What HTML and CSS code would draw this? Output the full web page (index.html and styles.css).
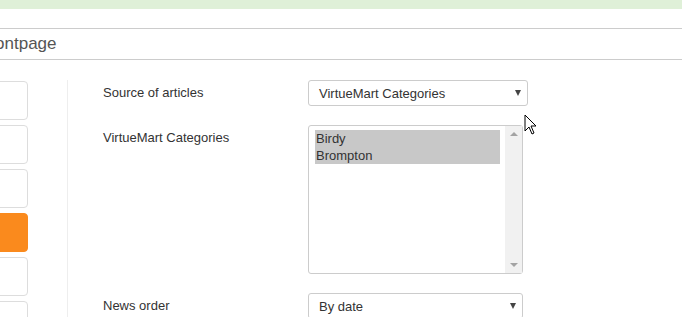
FILE: index.html
```html
<!DOCTYPE html>
<html lang="en">
<head>
    <meta charset="UTF-8">
    <meta name="viewport" content="width=device-width, initial-scale=1.0">
    <title>Frontpage</title>
    <link rel="stylesheet" href="styles.css">
</head>
<body>
    <div class="alert"></div>

    <div class="page-title">Frontpage</div>

    <div class="main">
        <div class="side-tabs">
            <div class="tab"></div>
            <div class="tab"></div>
            <div class="tab"></div>
            <div class="tab active"></div>
            <div class="tab"></div>
            <div class="tab"></div>
        </div>

        <div class="options">
            <div class="form-row">
                <label class="form-label">Source of articles</label>
                <div class="select wide">
                    <span>VirtueMart Categories</span>
                    <span class="caret"></span>
                </div>
            </div>

            <div class="form-row">
                <label class="form-label">VirtueMart Categories</label>
                <div class="multi">
                    <div class="multi-list">
                        <div class="opt selected">Birdy</div>
                        <div class="opt selected">Brompton</div>
                    </div>
                    <div class="scrollbar">
                        <span class="arrow up"></span>
                        <span class="arrow down"></span>
                    </div>
                </div>
            </div>

            <div class="form-row">
                <label class="form-label">News order</label>
                <div class="select">
                    <span>By date</span>
                    <span class="caret"></span>
                </div>
            </div>
        </div>
    </div>

    <!-- mouse pointer over the page -->
    <svg class="pointer" width="14" height="22" viewBox="0 0 14 22">
        <path d="M1 1 L1 17 L5 13 L8 20 L10 19 L7 12 L12 12 Z" fill="#fff" stroke="#000" stroke-width="1"/>
    </svg>
</body>
</html>
```

FILE: styles.css
```css
html {
    height: 317px;
    overflow: hidden;
}

body {
    font-family: 'Liberation Sans', Arial, sans-serif;
    font-size: 13px;
    color: #333;
    background: #fff;
    margin: 0;
    padding: 0;
    overflow: hidden;
    position: relative;
    height: 317px;
}

.alert {
    height: 9px;
    background-color: #dff0d8;
}

.page-title {
    margin-top: 19px;
    height: 30px;
    line-height: 30px;
    border-top: 1px solid #ccc;
    border-bottom: 1px solid #ccc;
    font-size: 17px;
    color: #555;
    text-indent: -21px;
}

.main {
    display: flex;
    padding-top: 20px;
    height: 237px;
    overflow: hidden;
}

.side-tabs {
    width: 28px;
    padding-top: 1px;
    display: flex;
    flex-direction: column;
    gap: 5px;
}

.tab {
    flex: none;
    height: 37px;
    margin-left: -10px;
    border: 1px solid #ddd;
    border-radius: 4px;
    background: #fff;
}

.tab.active {
    background-color: #fa8a1d;
    border-color: #fa8a1d;
}

.options {
    margin-left: 39px;
    border-left: 1px solid #eee;
    padding-left: 35px;
    flex: 1;
}

.form-row {
    display: flex;
    margin-bottom: 19px;
}

.form-label {
    width: 205px;
    line-height: 26px;
}

.select {
    height: 24px;
    border: 1px solid #ccc;
    border-radius: 3px;
    display: flex;
    align-items: center;
    justify-content: space-between;
    padding: 0 6px 0 10px;
    width: 197px;
}

.select.wide {
    width: 202px;
}

.caret {
    width: 0;
    height: 0;
    border-left: 3.5px solid transparent;
    border-right: 3.5px solid transparent;
    border-top: 6px solid #444;
}

.multi {
    width: 213px;
    height: 147px;
    border: 1px solid #ccc;
    border-radius: 3px;
    display: flex;
}

.multi-list {
    flex: 1;
    padding: 4px 5px 0 6px;
}

.opt {
    line-height: 17px;
    padding-left: 1px;
    color: #333;
}

.opt.selected {
    background-color: #c8c8c8;
}

.scrollbar {
    width: 17px;
    background: #f1f1f1;
    display: flex;
    flex-direction: column;
    justify-content: space-between;
    align-items: center;
    padding: 6px 0 6px;
}

.arrow {
    width: 0;
    height: 0;
    border-left: 4px solid transparent;
    border-right: 4px solid transparent;
}

.arrow.up {
    border-bottom: 4px solid #a3a3a3;
}

.arrow.down {
    border-top: 4px solid #a3a3a3;
}

.pointer {
    position: absolute;
    left: 524px;
    top: 114px;
}
```
